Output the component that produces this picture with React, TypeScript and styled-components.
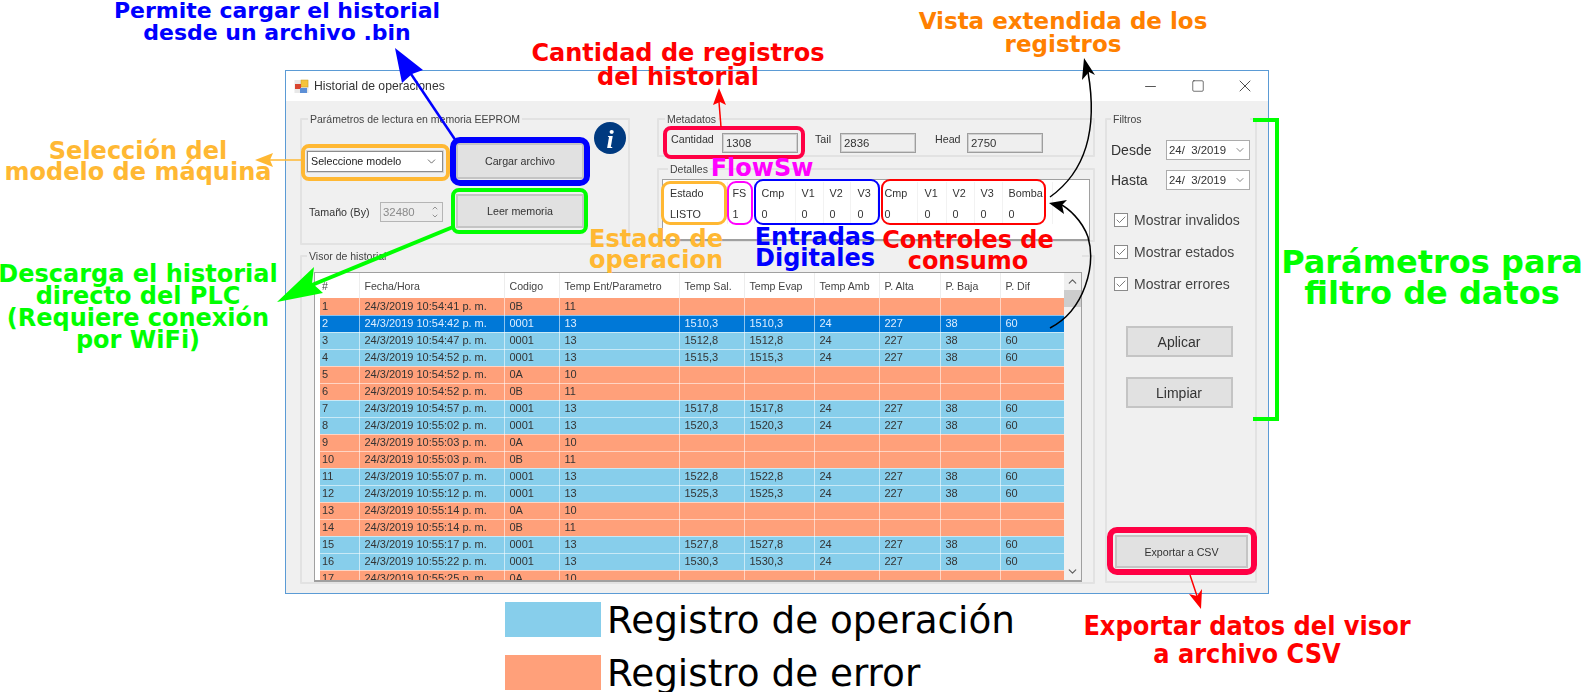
import React from 'react';
import styled, {createGlobalStyle} from 'styled-components';
import {Check, ChevronDown, ChevronUp, Minus, Square, X} from 'lucide-react';

const SKY = '#87CEEB';
const SALMON = '#FFA07A';
const SELECTED = '#0078D7';
const AMBER = '#FFB833';
const CRIMSON = '#FF0044';
const PURE_RED = '#FF0000';
const PURE_BLUE = '#0000FF';
const PURE_GREEN = '#00FF00';
const MAGENTA = '#FF00FF';
const UI_FONT = '"Liberation Sans", Arial, sans-serif';
const NOTE_FONT = '"DejaVu Sans", sans-serif';

const GlobalStyle = createGlobalStyle`
  html, body {
    margin: 0;
    padding: 0;
    background: #FFFFFF;
    overflow: hidden;
  }
`;

const Page = styled.div`
  position: relative;
  width: 1581px;
  height: 692px;
  overflow: hidden;
  padding: 70px 0 0 285px;
  box-sizing: border-box;
  background: #FFFFFF;
`;

const Window = styled.section`
  width: 984px;
  height: 524px;
  box-sizing: border-box;
  border: 1px solid #5B9BD5;
  background: #F0F0F0;
  display: flex;
  flex-direction: column;
  font-family: ${UI_FONT};
  font-size: 10.7px;
  color: #333333;
  filter: blur(0.35px);
`;

const TitleBar = styled.header`
  height: 30px;
  flex: none;
  background: #FFFFFF;
  display: flex;
  align-items: center;
  padding-left: 8px;
`;

const TitleText = styled.div`
  margin-left: 5px;
  flex: 1;
  font-size: 12.2px;
  color: #333333;
`;

const WindowButton = styled.div`
  width: 47px;
  height: 30px;
  display: flex;
  align-items: center;
  justify-content: center;
  color: #111111;
`;

const Client = styled.div`
  flex: 1;
  display: grid;
  grid-template-columns: 795px 152px;
  column-gap: 10px;
  padding: 17px 0 9px 14px;
  min-height: 0;
`;

const MainColumn = styled.div`
  display: flex;
  flex-direction: column;
  min-height: 0;
`;

const TopRow = styled.div`
  display: flex;
  gap: 27px;
  height: 127px;
`;

const Group = styled.div`
  box-sizing: border-box;
  border: 2px solid #E2E2E2;
  border-radius: 1px;
`;

const GroupTitle = styled.div`
  display: table;
  margin: -8px 0 0 ${p => p.$inset ?? 6}px;
  padding: 0 2px;
  background: #F0F0F0;
  line-height: 14px;
  font-size: 10.5px;
  color: #444444;
`;

const ParamsGroup = styled(Group)`
  width: 330px;
  height: 127px;
`;

const ParamsGrid = styled.div`
  display: grid;
  grid-template-columns: 136px 128px 32px;
  grid-template-rows: 36px 34px;
  column-gap: 13px;
  row-gap: 15px;
  align-items: center;
  margin: 17px 0 0 5px;
`;

const Combo = styled.div`
  height: 21px;
  box-sizing: border-box;
  border: 1px solid #8C8C8C;
  outline: 1px solid #D6D6D6;
  background: #FFFFFF;
  display: flex;
  align-items: center;
  justify-content: space-between;
  padding: 0 4px 0 3px;
  font-size: 10.7px;
  color: #222222;
`;

const WinButton = styled.button`
  box-sizing: border-box;
  width: ${p => p.$w}px;
  height: ${p => p.$h}px;
  justify-self: center;
  padding: 0;
  border: 2px solid #C4C4C4;
  border-radius: 0;
  background: #E1E1E1;
  font-family: ${UI_FONT};
  font-size: ${p => p.$size ?? 10.7}px;
  color: #333333;
`;

const InfoBadge = styled.svg`
  width: 32px;
  height: 32px;
  align-self: start;
  margin: -21px 0 0 -3px;
`;

const SizeField = styled.div`
  display: flex;
  align-items: center;
  justify-content: space-between;
  padding: 1px 0 0 2px;
  font-size: 10.7px;
`;

const Spinner = styled.div`
  width: 63px;
  height: 20px;
  box-sizing: border-box;
  border: 1px solid #B5B5B5;
  background: #EDEDED;
  display: flex;
  align-items: center;
  justify-content: space-between;
  padding-left: 2px;
  font-size: 11.4px;
  color: #8A8A8A;
`;

const SpinnerArrows = styled.div`
  width: 15px;
  height: 18px;
  display: flex;
  flex-direction: column;
  align-items: center;
  justify-content: center;
  color: #666666;
`;

const RightStack = styled.div`
  display: flex;
  flex-direction: column;
  gap: 11px;
  width: 438px;
`;

const MetaGroup = styled(Group)`
  height: 39px;
`;

const MetaRow = styled.div`
  display: flex;
  align-items: flex-start;
  margin: 7px 0 0 12px;
`;

const MetaLabel = styled.div`
  width: ${p => p.$w}px;
  line-height: 13px;
  font-size: 10.7px;
`;

const MetaInput = styled.div`
  width: 76px;
  height: 20px;
  box-sizing: border-box;
  border: 1px solid #9E9E9E;
  box-shadow: inset 0 0 0 1px #D0D0D0;
  background: #EFEFEF;
  margin-right: ${p => p.$after}px;
  padding-left: 3px;
  line-height: 19px;
  font-size: 11.4px;
`;

const DetailsGroup = styled(Group)`
  height: 74px;
  padding: 0 3px;
`;

const StateGrid = styled.div`
  height: 62px;
  margin-top: 3px;
  box-sizing: border-box;
  border: 1px solid #A0A0A0;
  border-bottom-width: 2px;
  background: #FFFFFF;
  overflow: hidden;
`;

const StateTable = styled.table`
  border-collapse: collapse;
  table-layout: fixed;
  width: 389px;
  margin-top: 2px;
  font-size: 10.8px;
`;

const StateCell = styled.td`
  width: ${p => p.$w}px;
  height: 21px;
  box-sizing: border-box;
  padding: 0 0 0 ${p => p.$pad}px;
  border-right: 1px solid #F2F2F2;
  color: #333333;
`;

const VisorGroup = styled(Group)`
  margin-top: 10px;
  flex: 1;
  padding: 0 11px 0 12px;
  display: flex;
  flex-direction: column;
`;

const Viewer = styled.div`
  margin-top: 9px;
  height: 310px;
  box-sizing: border-box;
  border: 1px solid #A0A0A0;
  border-bottom-width: 2px;
  background: #FFFFFF;
  display: flex;
  overflow: hidden;
`;

const LogArea = styled.div`
  flex: 1;
  padding-left: 5px;
  overflow: hidden;
`;

const LogTable = styled.table`
  border-collapse: collapse;
  table-layout: fixed;
  width: 745px;
  font-size: 11px;
`;

const HeadCell = styled.th`
  width: ${p => p.$w}px;
  height: 25px;
  padding: 0 0 0 5px;
  box-sizing: border-box;
  text-align: left;
  font-weight: normal;
  font-size: 10.6px;
  color: #444444;
  border-right: 1px solid #EDEDED;

  &:first-child {
    padding-left: 2px;
  }
`;

const LogRow = styled.tr`
  background: ${p => ({selected: SELECTED, op: SKY, err: SALMON}[p.$kind])};
  color: ${p => (p.$kind === 'selected' ? '#DDEEFF' : '#333333')};
`;

const LogCell = styled.td`
  height: 17px;
  padding: 0 0 0 5px;
  box-sizing: border-box;
  white-space: nowrap;
  line-height: 15px;
  border-right: 1px solid rgba(255, 255, 255, 0.55);
  border-bottom: 1px solid rgba(255, 255, 255, 0.55);

  &:first-child {
    padding-left: 2px;
  }
`;

const ScrollTrack = styled.div`
  width: 17px;
  flex: none;
  background: #F0F0F0;
  display: flex;
  flex-direction: column;
  align-items: center;
  color: #606060;
`;

const ScrollEnd = styled.div`
  height: 17px;
  margin: ${p => p.$margin};
  display: flex;
  align-items: center;
  justify-content: center;
`;

const ScrollThumb = styled.div`
  width: 100%;
  height: 17px;
  background: #CDCDCD;
`;

const FilterGroup = styled(Group)`
  height: 465px;
  padding: 0 5px 13px 4px;
  display: flex;
  flex-direction: column;
`;

const DateRow = styled.div`
  display: flex;
  align-items: center;
  justify-content: space-between;
  margin-top: ${p => p.$top}px;
  font-size: 14px;
`;

const DateBox = styled.div`
  width: 84px;
  height: 20px;
  box-sizing: border-box;
  border: 1px solid #ABABAB;
  background: #FFFFFF;
  display: flex;
  align-items: center;
  justify-content: space-between;
  padding: 0 3px 0 2px;
  font-size: 11.4px;
  white-space: pre;
  color: #333333;
`;

const CheckRow = styled.label`
  display: flex;
  align-items: center;
  gap: 6px;
  margin: ${p => p.$top}px 0 0 3px;
  height: 14px;
  font-size: 14px;
  color: #444444;
`;

const CheckBox = styled.div`
  width: 14px;
  height: 14px;
  box-sizing: border-box;
  border: 1px solid #8A8A8A;
  background: #FFFFFF;
  display: flex;
  align-items: center;
  justify-content: center;
  color: #444444;
`;

const FilterActions = styled.div`
  display: flex;
  flex-direction: column;
  align-items: center;
  gap: 20px;
  margin: 35px 0 0 -3px;
`;

const ExportButton = styled(WinButton)`
  margin-top: auto;
  margin-left: 4px;
  justify-self: auto;
`;

const Legend = styled.div`
  margin: 8px 0 0 220px;
  display: flex;
  flex-direction: column;
  gap: 18px;
`;

const LegendRow = styled.div`
  display: flex;
  align-items: center;
  gap: 6px;
  height: 35px;
  font-family: ${NOTE_FONT};
  font-size: 37.3px;
  color: #000000;
`;

const Swatch = styled.div`
  width: 96px;
  height: 35px;
  background: ${p => p.$color};
`;

const Ring = styled.div`
  position: absolute;
  left: ${p => p.$x}px;
  top: ${p => p.$y}px;
  width: ${p => p.$w}px;
  height: ${p => p.$h}px;
  box-sizing: border-box;
  border: ${p => p.$t}px solid ${p => p.$color};
  border-radius: ${p => p.$r}px;
`;

const Bracket = styled.div`
  position: absolute;
  left: 1253px;
  top: 118px;
  width: 26px;
  height: 303px;
  box-sizing: border-box;
  border: 4px solid ${PURE_GREEN};
  border-left: none;
`;

const ArrowLayer = styled.svg`
  position: absolute;
  left: 0;
  top: 0;
  width: 1581px;
  height: 692px;
  pointer-events: none;
`;

const Note = styled.div`
  position: absolute;
  left: ${p => p.$x}px;
  top: ${p => p.$y}px;
  transform: translateX(-50%);
  white-space: nowrap;
  text-align: center;
  font-family: ${p => p.$condensed ? '"DejaVu Sans Condensed", "DejaVu Sans", sans-serif' : NOTE_FONT};
  font-weight: bold;
  font-size: ${p => p.$size}px;
  line-height: ${p => p.$lh}px;
  color: ${p => p.$color};
`;

const STATE_COLUMNS = [
  {w: 64, pad: 7, head: 'Estado', value: 'LISTO'},
  {w: 27, pad: 5, head: 'FS', value: '1'},
  {w: 41, pad: 7, head: 'Cmp', value: '0'},
  {w: 28, pad: 6, head: 'V1', value: '0'},
  {w: 27, pad: 6, head: 'V2', value: '0'},
  {w: 27, pad: 7, head: 'V3', value: '0'},
  {w: 40, pad: 7, head: 'Cmp', value: '0'},
  {w: 29, pad: 7, head: 'V1', value: '0'},
  {w: 28, pad: 6, head: 'V2', value: '0'},
  {w: 28, pad: 6, head: 'V3', value: '0'},
  {w: 50, pad: 6, head: 'Bomba', value: '0'},
];

const LOG_COLUMNS = [
  {w: 39, head: '#'},
  {w: 145, head: 'Fecha/Hora'},
  {w: 55, head: 'Codigo'},
  {w: 120, head: 'Temp Ent/Parametro'},
  {w: 65, head: 'Temp Sal.'},
  {w: 70, head: 'Temp Evap'},
  {w: 65, head: 'Temp Amb'},
  {w: 61, head: 'P. Alta'},
  {w: 60, head: 'P. Baja'},
  {w: 65, head: 'P. Dif'},
];

const op = (time: string, temp: string, kind = 'op') => ({
  time, kind, code: '0001', param: '13', values: [temp, temp, '24', '227', '38', '60'],
});
const err = (time: string, code: string, param: string) => ({
  time, kind: 'err', code, param, values: ['', '', '', '', '', ''],
});

const LOG_ROWS = [
  err('10:54:41', '0B', '11'),
  op('10:54:42', '1510,3', 'selected'),
  op('10:54:47', '1512,8'),
  op('10:54:52', '1515,3'),
  err('10:54:52', '0A', '10'),
  err('10:54:52', '0B', '11'),
  op('10:54:57', '1517,8'),
  op('10:55:02', '1520,3'),
  err('10:55:03', '0A', '10'),
  err('10:55:03', '0B', '11'),
  op('10:55:07', '1522,8'),
  op('10:55:12', '1525,3'),
  err('10:55:14', '0A', '10'),
  err('10:55:14', '0B', '11'),
  op('10:55:17', '1527,8'),
  op('10:55:22', '1530,3'),
  err('10:55:25', '0A', '10'),
];

const AppIcon = () => (
  <svg width="15" height="15" viewBox="0 0 15 15">
    <rect x="0.5" y="1" width="14" height="13" fill="#E8E8E8" />
    <rect x="7" y="1" width="7" height="7" fill="#F5C33B" stroke="#C89A1E" strokeWidth="0.5" />
    <rect x="1" y="5" width="6" height="5" fill="#D8452F" />
    <rect x="6" y="9" width="7" height="5" fill="#5C8FD6" />
  </svg>
);

const InfoIcon = () => (
  <InfoBadge viewBox="0 0 32 32">
    <circle cx="16" cy="16" r="16" fill="#003A80" />
    <text x="16" y="26" textAnchor="middle" fontFamily="Liberation Serif" fontStyle="italic" fontWeight="bold" fontSize="26" fill="#FFFFFF">i</text>
  </InfoBadge>
);

const MetaField = ({label, w, value, after}: {label: string; w: number; value: string; after: number}) => (
  <>
    <MetaLabel $w={w}>{label}</MetaLabel>
    <MetaInput $after={after}>{value}</MetaInput>
  </>
);

const DateField = ({label, top}: {label: string; top: number}) => (
  <DateRow $top={top}>
    {label}
    <DateBox>
      {'24/  3/2019'}
      <ChevronDown size={12} strokeWidth={1.2} />
    </DateBox>
  </DateRow>
);

const CheckOption = ({label, top}: {label: string; top: number}) => (
  <CheckRow $top={top}>
    <CheckBox><Check size={12} strokeWidth={1.4} /></CheckBox>
    {label}
  </CheckRow>
);

const Arrows = () => (
  <ArrowLayer viewBox="0 0 1581 692">
    <path d="M456 141 L411 74" stroke={PURE_BLUE} strokeWidth="2.5" fill="none" />
    <polygon points="395,48 423,70 412,74 402,83" fill={PURE_BLUE} />
    <path d="M453 227 L312 285" stroke={PURE_GREEN} strokeWidth="4" fill="none" />
    <polygon points="277,302 314,267 312,283 323,293" fill={PURE_GREEN} />
    <path d="M301 160 L270 160" stroke={AMBER} strokeWidth="1.5" fill="none" />
    <polygon points="255,160 273,153 270,160 273,167" fill={AMBER} />
    <path d="M721 127 L719 102" stroke={PURE_RED} strokeWidth="1.5" fill="none" />
    <polygon points="719,88 726,105 720,102 713,105" fill={PURE_RED} />
    <path d="M1190 575 L1197 596" stroke={PURE_RED} strokeWidth="1.5" fill="none" />
    <polygon points="1201,609 1189,594 1197,596 1202,589" fill={PURE_RED} />
    <path d="M1050 197 C1085 172 1098 130 1088 72" stroke="#000000" strokeWidth="1.5" fill="none" />
    <polygon points="1084,58 1095,75 1089,72 1082,80" fill="#000000" />
    <path d="M1050 328 C1085 310 1096 265 1088 237 C1082 220 1068 208 1060 204" stroke="#000000" strokeWidth="1.5" fill="none" />
    <polygon points="1049,203 1067,200 1062,205 1064,214" fill="#000000" />
  </ArrowLayer>
);

const Annotations = () => (
  <>
    <Ring $x={301} $y={144} $w={149} $h={37} $t={4} $r={8} $color={AMBER} />
    <Ring $x={450} $y={137} $w={140} $h={49} $t={6} $r={10} $color={PURE_BLUE} />
    <Ring $x={451} $y={188} $w={137} $h={46} $t={4} $r={8} $color={PURE_GREEN} />
    <Ring $x={663} $y={126} $w={142} $h={33} $t={4} $r={8} $color={CRIMSON} />
    <Ring $x={661} $y={181} $w={66} $h={44} $t={3} $r={9} $color={AMBER} />
    <Ring $x={727} $y={181} $w={26} $h={44} $t={2} $r={9} $color={MAGENTA} />
    <Ring $x={754} $y={179} $w={126} $h={46} $t={2} $r={9} $color={PURE_BLUE} />
    <Ring $x={881} $y={179} $w={165} $h={46} $t={2} $r={9} $color={PURE_RED} />
    <Ring $x={1107} $y={527} $w={150} $h={48} $t={6} $r={10} $color={CRIMSON} />
    <Bracket />
    <Arrows />
    <Note $x={277} $y={0} $size={22} $lh={22} $color={PURE_BLUE}>Permite cargar el historial<br />desde un archivo .bin</Note>
    <Note $x={678} $y={41} $size={24} $lh={24} $color={PURE_RED}>Cantidad de registros<br />del historial</Note>
    <Note $x={1063} $y={10} $size={23} $lh={23} $color="#FF8000">Vista extendida de los<br />registros</Note>
    <Note $x={138} $y={141} $size={24} $lh={21} $color={AMBER}>Selección del<br />modelo de máquina</Note>
    <Note $x={138} $y={263} $size={24} $lh={22} $color={PURE_GREEN}>Descarga el historial<br />directo del PLC<br />(Requiere conexión<br />por WiFi)</Note>
    <Note $x={762} $y={157} $size={24} $lh={23} $color={MAGENTA}>FlowSw</Note>
    <Note $x={656} $y={229} $size={24} $lh={21} $color={AMBER}>Estado de<br />operacion</Note>
    <Note $x={815} $y={227} $size={24} $lh={21} $color={PURE_BLUE}>Entradas<br />Digitales</Note>
    <Note $x={968} $y={230} $size={24} $lh={21} $color={PURE_RED}>Controles de<br />consumo</Note>
    <Note $x={1432} $y={247} $size={32} $lh={31} $color={PURE_GREEN}>Parámetros para<br />filtro de datos</Note>
    <Note $x={1247} $y={612} $size={26.8} $lh={28} $condensed $color={PURE_RED}>Exportar datos del visor<br />a archivo CSV</Note>
  </>
);

const App = () => (
  <Page>
    <GlobalStyle />
    <Window>
      <TitleBar>
        <AppIcon />
        <TitleText>Historial de operaciones</TitleText>
        <WindowButton><Minus size={17} strokeWidth={1} /></WindowButton>
        <WindowButton><Square size={14} strokeWidth={1} /></WindowButton>
        <WindowButton><X size={20} strokeWidth={0.9} /></WindowButton>
      </TitleBar>
      <Client>
        <MainColumn>
          <TopRow>
            <ParamsGroup>
              <GroupTitle>Parámetros de lectura en memoria EEPROM</GroupTitle>
              <ParamsGrid>
                <Combo>
                  Seleccione modelo
                  <ChevronDown size={13} strokeWidth={1.2} />
                </Combo>
                <WinButton $w={128} $h={36}>Cargar archivo</WinButton>
                <InfoIcon />
                <SizeField>
                  Tamaño (By)
                  <Spinner>
                    32480
                    <SpinnerArrows>
                      <ChevronUp size={8} strokeWidth={2} />
                      <ChevronDown size={8} strokeWidth={2} />
                    </SpinnerArrows>
                  </Spinner>
                </SizeField>
                <WinButton $w={128} $h={34}>Leer memoria</WinButton>
              </ParamsGrid>
            </ParamsGroup>
            <RightStack>
              <MetaGroup>
                <GroupTitle>Metadatos</GroupTitle>
                <MetaRow>
                  <MetaField label="Cantidad" w={51} value="1308" after={17} />
                  <MetaField label="Tail" w={25} value="2836" after={19} />
                  <MetaField label="Head" w={32} value="2750" after={0} />
                </MetaRow>
              </MetaGroup>
              <DetailsGroup>
                <GroupTitle>Detalles</GroupTitle>
                <StateGrid>
                  <StateTable>
                    <tbody>
                      <tr>{STATE_COLUMNS.map((c, i) => <StateCell key={i} $w={c.w} $pad={c.pad}>{c.head}</StateCell>)}</tr>
                      <tr>{STATE_COLUMNS.map((c, i) => <StateCell key={i} $w={c.w} $pad={c.pad}>{c.value}</StateCell>)}</tr>
                    </tbody>
                  </StateTable>
                </StateGrid>
              </DetailsGroup>
            </RightStack>
          </TopRow>
          <VisorGroup>
            <GroupTitle $inset={-7}>Visor de historial</GroupTitle>
            <Viewer>
              <LogArea>
                <LogTable>
                  <thead>
                    <tr>{LOG_COLUMNS.map(c => <HeadCell key={c.head} $w={c.w}>{c.head}</HeadCell>)}</tr>
                  </thead>
                  <tbody>
                    {LOG_ROWS.map((r, i) => (
                      <LogRow key={i} $kind={r.kind}>
                        <LogCell>{i + 1}</LogCell>
                        <LogCell>24/3/2019 {r.time} p. m.</LogCell>
                        <LogCell>{r.code}</LogCell>
                        <LogCell>{r.param}</LogCell>
                        {r.values.map((v, j) => <LogCell key={j}>{v}</LogCell>)}
                      </LogRow>
                    ))}
                  </tbody>
                </LogTable>
              </LogArea>
              <ScrollTrack>
                <ScrollEnd $margin="0"><ChevronUp size={13} strokeWidth={2.2} /></ScrollEnd>
                <ScrollThumb />
                <ScrollEnd $margin="auto 0 0"><ChevronDown size={13} strokeWidth={2.2} /></ScrollEnd>
              </ScrollTrack>
            </Viewer>
          </VisorGroup>
        </MainColumn>
        <FilterGroup>
          <GroupTitle $inset={0}>Filtros</GroupTitle>
          <DateField label="Desde" top={14} />
          <DateField label="Hasta" top={10} />
          <CheckOption label="Mostrar invalidos" top={23} />
          <CheckOption label="Mostrar estados" top={18} />
          <CheckOption label="Mostrar errores" top={18} />
          <FilterActions>
            <WinButton $w={107} $h={31} $size={14}>Aplicar</WinButton>
            <WinButton $w={107} $h={31} $size={14}>Limpiar</WinButton>
          </FilterActions>
          <ExportButton $w={133} $h={33}>Exportar a CSV</ExportButton>
        </FilterGroup>
      </Client>
    </Window>
    <Legend>
      <LegendRow><Swatch $color={SKY} />Registro de operación</LegendRow>
      <LegendRow><Swatch $color={SALMON} />Registro de error</LegendRow>
    </Legend>
    <Annotations />
  </Page>
);

export default App;
